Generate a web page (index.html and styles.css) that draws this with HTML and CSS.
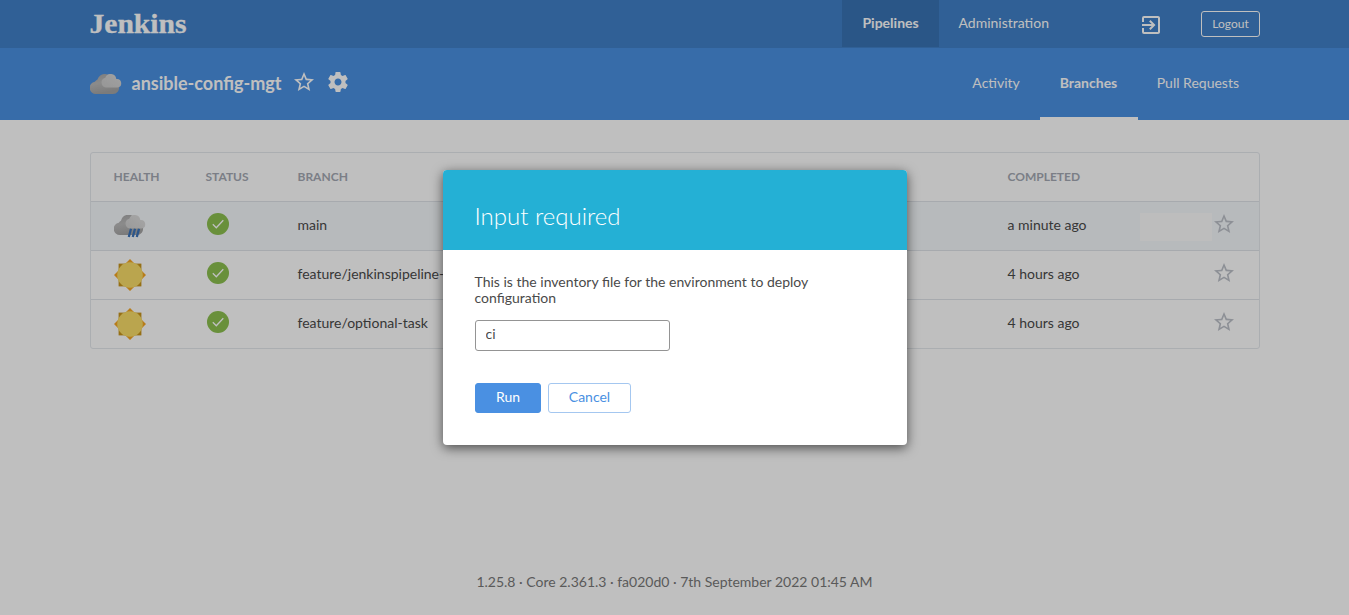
FILE: index.html
```html
<!DOCTYPE html>
<html lang="en">
<head>
<meta charset="utf-8">
<title>Jenkins Blue Ocean</title>
<link rel="stylesheet" href="styles.css">
</head>
<body>
<svg class="defs" aria-hidden="true">
  <defs>
    <linearGradient id="cloud-back" x1="0" y1="0" x2="0.3" y2="1"><stop offset="0" stop-color="#a6a6a6"/><stop offset=".5" stop-color="#bababa"/><stop offset="1" stop-color="#a4a4a4"/></linearGradient>
    <linearGradient id="cloud-front" x1="0" y1="1" x2="1" y2="0"><stop offset="0" stop-color="#cecece"/><stop offset="1" stop-color="#dedede"/></linearGradient>
    <linearGradient id="cloud-dim" x1="0" y1="1" x2="1" y2="0"><stop offset="0" stop-color="#c9c9c9"/><stop offset="1" stop-color="#d8d8d8"/></linearGradient>
    <symbol id="star" viewBox="0 0 24 24"><path d="M22 9.240l-7.190-.62L12 2 9.190 8.630 2 9.240l5.460 4.730L5.820 21 12 17.270 18.180 21l-1.630-7.030L22 9.240zM12 15.400l-3.760 2.270 1-4.280-3.320-2.880 4.380-.38L12 6.100l1.710 4.040 4.380.38-3.320 2.880 1 4.280L12 15.400z"/></symbol>
    <symbol id="sun" viewBox="0 0 32 32"><path fill="#c8941c" d="M4.600 4.600h22.800v22.800H4.600z"/><path fill="#f5a623" d="M16 0l5 5H11zM16 32l5-5H11zM0 16l5-5v10zM32 16l-5-5v10z"/><circle cx="16" cy="16" r="12.800" fill="#f8dc68"/></symbol>
    <symbol id="success" viewBox="0 0 22 22"><circle cx="11" cy="11" r="11" fill="#8cc04f"/><path d="M5.800 11.300l3.500 3.500 7-7.600" fill="none" stroke="#fff" stroke-width="1.350"/></symbol>
    <symbol id="cloud" viewBox="0 0 32 20"><path fill="url(#cloud-back)" d="M6 20a6.200 6.200 0 0 1-1.200-12.300A7 7 0 0 1 7.500 5.600 7.700 7.700 0 0 1 20 2l9 10.500A6.300 6.300 0 0 1 23 20z"/><path fill="url(#cloud-dim)" d="M15.800 13.500a5 5 0 0 1-.5-9.800 5.700 5.700 0 0 1 11 1.300 4.300 4.300 0 0 1 1.300 8.500z"/></symbol>
    <symbol id="rain" viewBox="0 0 32 23"><path fill="url(#cloud-back)" d="M6 20a6.200 6.200 0 0 1-1.200-12.300A7 7 0 0 1 7 5.800 7.700 7.700 0 0 1 20 2l9 10.500A6.300 6.300 0 0 1 23 20z"/><path fill="url(#cloud-front)" d="M15.800 13.500a5 5 0 0 1-.5-9.800 5.700 5.700 0 0 1 11 1.300 4.300 4.300 0 0 1 1.300 8.500z"/><path stroke="#3a73ba" stroke-width="2.300" d="M17 13.800l-2.200 8.200M21 13.800l-2.200 8.200M25 13.800l-2.200 8.200"/></symbol>
  </defs>
</svg>

<div class="page">
  <header class="topbar">
    <svg class="logo" viewBox="0 0 97 30"><text class="logo-text" x="-0.500" y="24" textLength="97" lengthAdjust="spacingAndGlyphs">Jenkins</text></svg>
    <nav class="topnav">
      <a class="topnav-item topnav-active">Pipelines</a>
      <a class="topnav-item">Administration</a>
    </nav>
    <svg class="exit-icon" viewBox="0 0 24 24"><path d="M10.090 15.590L11.500 17l5-5-5-5-1.410 1.410L12.670 11H3v2h9.670l-2.580 2.590zM19 3H5a2 2 0 0 0-2 2v4h2V5h14v14H5v-4H3v4a2 2 0 0 0 2 2h14c1.100 0 2-.9 2-2V5c0-1.100-.9-2-2-2z"/></svg>
    <button class="logout">Logout</button>
  </header>

  <section class="pipebar">
    <svg class="pipe-weather"><use href="#cloud"/></svg>
    <h1 class="pipe-name">ansible-config-mgt</h1>
    <svg class="pipe-icon pipe-star"><use href="#star"/></svg>
    <svg class="pipe-icon" viewBox="0 0 24 24"><path d="M19.430 12.980c.04-.32.07-.64.07-.98s-.03-.66-.07-.98l2.110-1.650c.19-.15.24-.42.12-.64l-2-3.460c-.12-.22-.39-.3-.61-.22l-2.490 1c-.52-.4-1.080-.73-1.690-.98l-.38-2.650A.49.49 0 0 0 14 2h-4c-.25 0-.46.18-.49.42l-.38 2.650c-.61.25-1.170.59-1.690.98l-2.490-1c-.23-.09-.49 0-.61.22l-2 3.460c-.13.22-.07.49.12.64l2.110 1.650c-.04.32-.07.65-.07.98s.03.66.07.98l-2.110 1.650c-.19.15-.24.42-.12.64l2 3.460c.12.22.39.3.61.22l2.490-1c.52.4 1.080.73 1.690.98l.38 2.650c.03.24.24.42.49.42h4c.25 0 .46-.18.49-.42l.38-2.650c.61-.25 1.170-.59 1.690-.98l2.490 1c.23.09.49 0 .61-.22l2-3.460c.12-.22.07-.49-.12-.64l-2.110-1.650zM12 15.500c-1.930 0-3.500-1.570-3.500-3.500s1.570-3.500 3.500-3.500 3.500 1.570 3.500 3.500-1.570 3.500-3.500 3.500z"/></svg>
    <nav class="tabs">
      <a class="tab">Activity</a>
      <a class="tab tab-active">Branches</a>
      <a class="tab">Pull Requests</a>
    </nav>
  </section>

  <main class="branches">
    <div class="row row-head"><span>HEALTH</span><span>STATUS</span><span>BRANCH</span><span>COMPLETED</span></div>
    <div class="row row-hover">
      <svg class="rain"><use href="#rain"/></svg><svg class="status"><use href="#success"/></svg><span>main</span><span>a minute ago</span><span class="actions"></span><svg class="favorite"><use href="#star"/></svg>
    </div>
    <div class="row">
      <svg class="sun"><use href="#sun"/></svg><svg class="status"><use href="#success"/></svg><span>feature/jenkinspipeline-stages</span><span>4 hours ago</span><span></span><svg class="favorite"><use href="#star"/></svg>
    </div>
    <div class="row">
      <svg class="sun"><use href="#sun"/></svg><svg class="status"><use href="#success"/></svg><span>feature/optional-task</span><span>4 hours ago</span><span></span><svg class="favorite"><use href="#star"/></svg>
    </div>
  </main>
  <footer class="footer">1.25.8 · Core 2.361.3 · fa020d0 · 7th September 2022 01:45 AM</footer>
</div>

<div class="overlay">
  <div class="dialog" role="dialog">
    <div class="dialog-head">Input required</div>
    <div class="dialog-body">
      <p class="dialog-text">This is the inventory file for the environment to deploy configuration</p>
      <input class="dialog-input" type="text" value="ci">
      <div class="dialog-buttons"><button class="btn btn-run">Run</button><button class="btn btn-cancel">Cancel</button></div>
    </div>
  </div>
</div>
</body>
</html>
```
FILE: styles.css
```css
* { box-sizing: border-box; }
body { margin: 0; background: #fff; color: #4a4a4a; font: 14px/16px Lato, sans-serif; overflow: hidden; }
.defs { position: absolute; width: 0; height: 0; }
.page { height: 615px; display: flex; flex-direction: column; }
.topbar { height: 48px; flex: none; padding: 0 89px 0 90px; display: flex; align-items: center; background: #4080c8; color: #fff; }
.logo { width: 97px; height: 30px; overflow: visible; }
.logo-text { font: bold 26.5px "Liberation Serif", serif; fill: #fff; stroke: #fff; stroke-width: 0.3px; }
.topnav { display: flex; margin-left: auto; align-self: flex-start; }
.topnav-item { height: 47px; line-height: 46px; padding: 0 20px 0 19px; }
.topnav-active { width: 97px; padding-left: 20px; font-weight: bold; background: #3973b5; }
.exit-icon { width: 24px; height: 24px; margin: 2px 38px 0 70px; fill: #fff; }
.logout { width: 59px; height: 26px; padding: 0; border: 1px solid #fff; border-radius: 3px; background: none; color: #fff; font: 12px/22px Lato, sans-serif; }
.pipebar { height: 72px; flex: none; padding: 0 90px; display: flex; align-items: center; background: #4a90e2; color: #fff; }
.pipe-weather { width: 32px; height: 20px; margin-top: -1px; }
.pipe-name { margin: -2px 9px 0 9.5px; width: 151.5px; white-space: nowrap; font: bold 18px/22px Lato, sans-serif; }
.pipe-icon { width: 24px; height: 24px; margin: -5px 0 0 10px; fill: #fff; }
.pipe-star { margin-left: 0; }
.tabs { margin-left: auto; display: flex; align-self: stretch; }
.tab { padding: 0 20px 0 19px; line-height: 70px; }
.tab-active { width: 98px; padding-left: 20px; font-weight: bold; border-bottom: 3px solid #fff; }
.branches { width: 1170px; flex: none; margin: 32px 0 0 90px; border: 1px solid #e4e8ed; border-radius: 3px; }
.row { height: 49px; padding: 0 24px 0 22.5px; display: grid; grid-template-columns: 92px 92px 710px 133px 73px 1fr; align-items: center; border-top: 1px solid #dfe3e8; line-height: 46px; }
.row span { margin-top: -2px; }
.row-head { height: 48px; border-top: 0; font-size: 12px; font-weight: bold; color: #a4a9b3; }
.row-head span { margin-top: -1px; }
.row-hover { background: #f5f8fb; }
.rain { width: 32px; height: 23px; margin-top: 1px; }
.sun { width: 32px; height: 32px; }
.status { width: 22px; height: 22px; margin: -4px 0 0 1.5px; }
.row .actions { width: 72px; height: 28px; margin: 1px 0 0 -1px; background: #fcfcfc; }
.favorite { width: 24px; height: 24px; margin: -4px 0 0 -1.5px; fill: #bcc0c8; }
.footer { margin-top: auto; height: 42px; line-height: 18px; text-align: center; color: #797979; }
.overlay { position: absolute; inset: 0; display: flex; justify-content: center; align-items: flex-start; padding: 170px 0 0 1px; background: rgba(0, 0, 0, .25); }
.dialog { width: 464px; height: 275px; background: #fff; border-radius: 4px; overflow: hidden; box-shadow: 0 3px 12px rgba(0, 0, 0, .6); }
.dialog-head { height: 80px; padding: 31px 31.5px 0; background: #24b0d5; color: #fff; font-size: 24px; font-weight: 300; line-height: 30px; }
.dialog-body { padding: 24px 32px; }
.dialog-text { margin: 0 0 14px -0.5px; }
.dialog-input { display: block; width: 195px; height: 31px; padding: 0 9.5px 4px; border: 1px solid #949494; border-radius: 3px; font: 14px Lato, sans-serif; color: #4a4a4a; }
.dialog-buttons { display: flex; gap: 7px; margin-top: 32px; }
.btn { height: 30px; padding: 0 0 4px; border: 1px solid #4a90e2; border-radius: 3px; font: 14px Lato, sans-serif; }
.btn-run { width: 66px; background: #4a90e2; color: #fff; }
.btn-cancel { width: 83px; background: #fff; color: #4a90e2; border-color: #a4c7f0; }
```
